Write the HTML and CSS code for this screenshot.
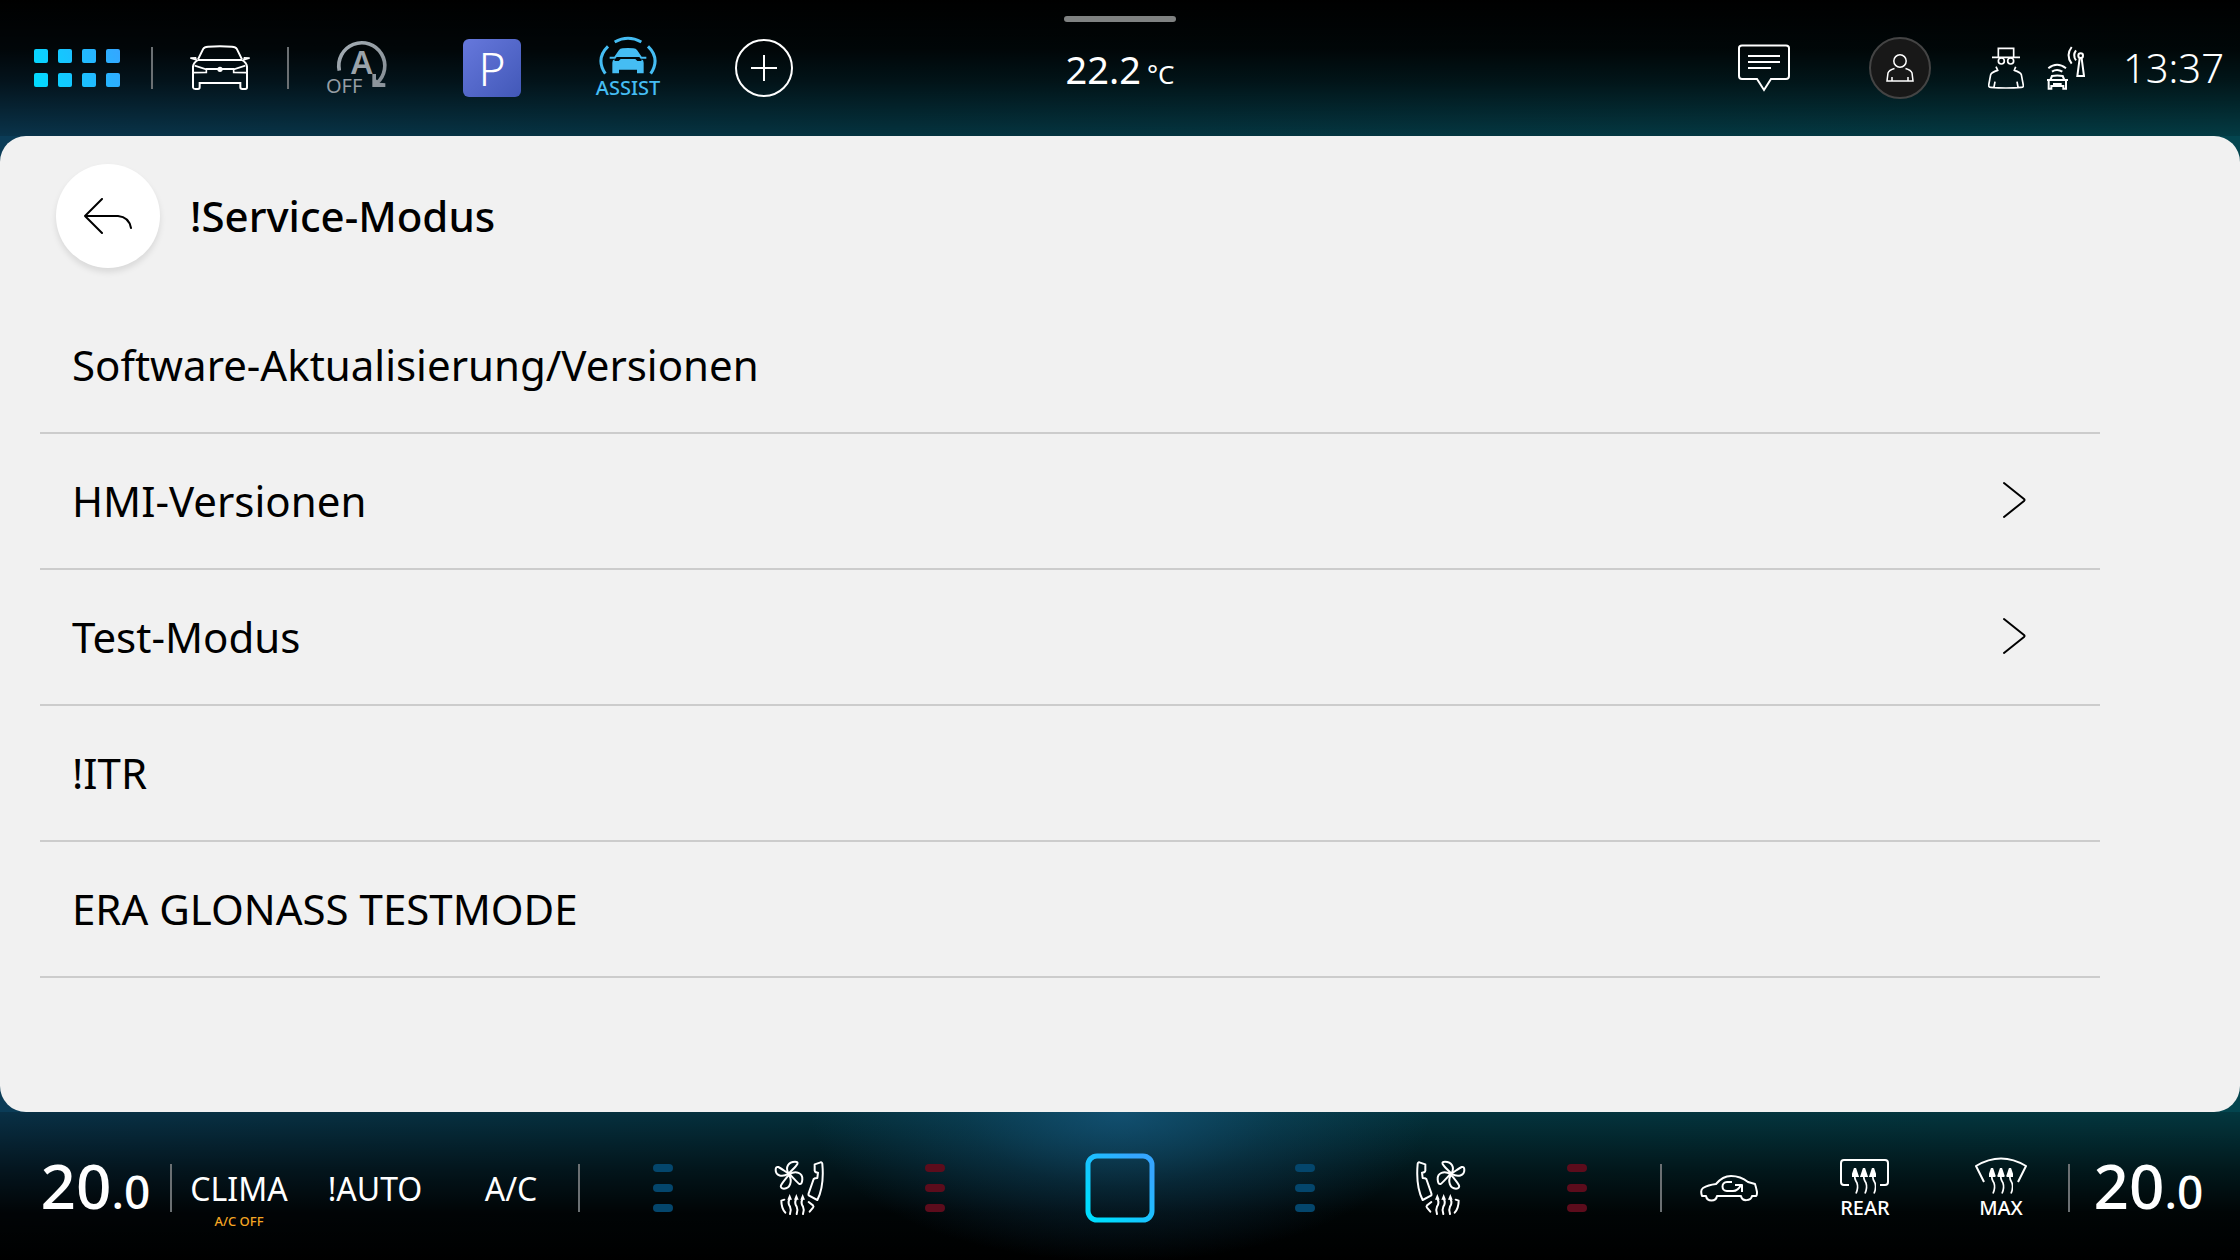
FILE: index.html
```html
<!DOCTYPE html>
<html lang="de">
<head>
<meta charset="utf-8">
<meta name="viewport" content="width=device-width, initial-scale=1">
<title>Service-Modus</title>
<link rel="stylesheet" href="styles.css">
</head>
<body>
<svg class="defs" aria-hidden="true">
  <defs>
    <linearGradient id="accent" gradientUnits="userSpaceOnUse" x1="0" y1="38" x2="86" y2="0">
      <stop offset="0" stop-color="#00dcff"/><stop offset="1" stop-color="#35a6ff"/>
    </linearGradient>
    <linearGradient id="home" x1="0" y1="1" x2="1" y2="0">
      <stop offset="0.15" stop-color="#00dcff"/><stop offset="0.85" stop-color="#35a6ff"/>
    </linearGradient>
    <linearGradient id="steel" x1="0" y1="0" x2="1" y2="1">
      <stop offset="0" stop-color="#a4adb4"/><stop offset="1" stop-color="#868e95"/>
    </linearGradient>
    <symbol id="seat" viewBox="28 34 150 168">
      <g fill="none" stroke="#fff" stroke-width="6" stroke-linejoin="round" stroke-linecap="round">
        <path d="M72 75 C60 55 72 39 91 39 Q101 39 98 46 C94 54 84 62 72 75Z"/>
        <path d="M72 75 C52 87 33 81 33 64 Q33 53 41 55 C48 58 58 66 72 75Z"/>
        <path d="M74 76 C94 66 114 72 113 92 Q112 108 104 106 C99 103 88 90 74 76Z"/>
        <path d="M73 78 C84 98 76 120 58 120 Q46 119 49 110 C52 104 62 92 73 78Z"/>
        <path d="M150 47 L168 41 Q172 40 173 46 Q179 112 158 154 L132 140 Q131 138 132 134 L147 91 Q150 88 158 88 L160 72 Q151 72 150 66Z"/>
        <path d="M59 153 L50 156 Q50 178 62 192"/>
        <path d="M132 160 L145 170 Q148 173 145 177 L135 189"/>
        <path d="M75 150 Q68 162 76 174 Q81 185 76 196"/>
        <path d="M95 150 Q88 162 96 174 Q101 185 96 196"/>
        <path d="M114 150 Q107 162 115 174 Q120 185 115 196"/>
      </g>
      <path fill="#fff" d="M68 153 L75 136 L82 153Z M88 153 L95 136 L102 153Z M107 153 L114 136 L121 153Z"/>
    </symbol>
    <symbol id="heat" viewBox="0 0 24 26">
      <g fill="none" stroke="#fff" stroke-width="1.700">
        <path d="M3 6 C2 10 3 12 5 15 C6 18 6 21 4 25.500"/>
        <path d="M12 6 C11 10 12 12 14 15 C15 18 15 21 13 25.500"/>
        <path d="M21 6 C20 10 21 12 23 15 C24 18 24 21 22 25.500"/>
      </g>
      <path fill="#fff" d="M.3 8 L3 0 L5.700 8Z M9.300 8 L12 0 L14.700 8Z M18.300 8 L21 0 L23.700 8Z"/>
    </symbol>
  </defs>
</svg>

<div class="screen">
  <header class="topbar">
    <nav class="shortcuts" aria-label="Schnellzugriff">
      <button class="apps" aria-label="Apps">
        <svg width="86" height="38" viewBox="0 0 86 38" fill="url(#accent)">
          <rect width="14" height="14" rx="2"/><rect x="24" width="14" height="14" rx="2"/><rect x="48" width="14" height="14" rx="2"/><rect x="72" width="14" height="14" rx="2"/>
          <rect y="24" width="14" height="14" rx="2"/><rect x="24" y="24" width="14" height="14" rx="2"/><rect x="48" y="24" width="14" height="14" rx="2"/><rect x="72" y="24" width="14" height="14" rx="2"/>
        </svg>
      </button>
      <span class="divider"></span>
      <button class="shortcut" aria-label="Fahrzeug">
        <svg width="60" height="46" viewBox="570 135 180 138" fill="none" stroke="#fff" stroke-width="6">
          <path d="M594 178 L610 146 Q613 141 624 140 Q660 137 696 140 Q707 141 710 146 L726 178"/>
          <path d="M571 174 L587 173 L589 180Z M749 174 L733 173 L731 180Z" stroke-width="4"/>
          <path d="M594 180 H726"/>
          <path d="M594 180 Q580 188 579 200 V262 Q580 267 586 267 H594 Q599 267 599 262 V249 H721 V262 Q721 267 727 267 H736 Q741 267 741 262 V200 Q740 188 726 180"/>
          <path d="M584 197 L619 208 V217 L580 218 M736 197 L701 208 V217 L740 218" stroke-width="5"/>
          <path d="M617 207 H703"/>
          <circle cx="660" cy="208" r="8" fill="#fff" stroke="none"/>
        </svg>
      </button>
      <span class="divider"></span>
      <button class="shortcut" aria-label="Start-Stopp">
        <svg width="64" height="64" viewBox="324 36 64 64">
          <g transform="scale(.333333)">
            <path d="M1018 212 A69 69 0 1 1 1130 250" fill="none" stroke="url(#steel)" stroke-width="11"/>
            <path d="M1117 222 V261 H1156 V250 L1138 248 L1128 238 V222Z" fill="#8d959c"/>
          </g>
          <text class="start-stop-letter" x="351" y="74">A</text>
          <text class="start-stop-state" x="326" y="93">OFF</text>
        </svg>
      </button>
      <button class="shortcut" aria-label="Parken"><span class="park">P</span></button>
      <button class="shortcut assist">
        <svg width="60" height="40" viewBox="534 112 180 120">
          <g fill="none" stroke="#45bdf3" stroke-width="9">
            <path d="M584 130 Q624 108 664 130 M564 143 Q526 180 556 225 M684 143 Q722 180 692 225"/>
          </g>
          <path fill="#45bdf3" d="M569 174 H583 L597 154 Q600 149 608 149 Q624 147 640 149 Q648 149 651 154 L665 174 H679 V180 H662 L658 175 H590 L586 180 H569Z M577 192 Q577 184 583 182 L584 187 H596 L602 181 H646 L652 187 H664 L665 182 Q671 184 671 192 V224 H651 V213 H597 V224 H577Z"/>
        </svg>
        <span>ASSIST</span>
      </button>
      <button class="shortcut" aria-label="Hinzufügen">
        <svg width="58" height="58" viewBox="0 0 58 58" fill="none" stroke="#fff" stroke-width="2">
          <circle cx="29" cy="29" r="28"/><path d="M29 16 V42 M16 29 H42"/>
        </svg>
      </button>
    </nav>

    <div class="outside">
      <span class="handle"></span>
      <p class="outside-temp">22.2<span>°C</span></p>
    </div>

    <div class="status">
      <button class="shortcut" aria-label="Mitteilungen">
        <svg width="52" height="48" viewBox="0 0 52 48" fill="none" stroke="#fff" stroke-width="2">
          <path d="M4 1.500 H48 Q51 1.500 51 4 V32 Q51 35 48 35 H33 L26 46 L19 35 H4 Q1 35 1 32 V4 Q1 1.500 4 1.500Z"/>
          <path d="M10 12 H42 M10 18 H42 M10 24 H33"/>
        </svg>
      </button>
      <button class="shortcut" aria-label="Benutzer">
        <span class="avatar">
          <svg width="28" height="28" viewBox="0 0 28 28" fill="none" stroke="#fff" stroke-width="1.500">
            <circle cx="14" cy="7" r="6.200"/>
            <path d="M8.500 14.500 Q3 16 2 19 L1 27 H27 L26 19 Q25 16 19.500 14.500 M6 23 V27 M22 23 V27"/>
          </svg>
        </span>
      </button>
      <div class="signals">
        <svg width="36" height="42" viewBox="24 35 108 126" fill="none" stroke="#fff" stroke-width="5">
          <path d="M36 66 H120 M55 66 V39 H101 V66"/>
          <circle cx="64" cy="77" r="9"/><circle cx="92" cy="77" r="9"/>
          <path d="M48 94 L53 105 Q34 111 32 118 L26 150 Q26 156 32 156 Q78 160 124 156 Q131 156 130 150 L124 118 Q122 111 103 105 L107 94 M45 139 L42 155 M111 139 L114 155"/>
        </svg>
        <svg width="38" height="44" viewBox="202 28 114 132" fill="none" stroke="#fff" stroke-width="6">
          <path d="M202 130 H265 M212 130 L217 118 Q233 115 249 118 L254 130 M207 131 V156 H215 V148 H251 V156 H259 V131 M220 142 H246"/>
          <path d="M206 95 Q232 74 259 95 M217 105 Q232 95 248 105"/>
          <circle cx="303" cy="57" r="7"/>
          <path d="M300 65 L293 118 H313 L306 65"/>
          <path d="M289 41 Q278 56 289 71 M276 31 Q257 56 276 81"/>
        </svg>
      </div>
      <time class="clock">13:37</time>
    </div>
  </header>

  <main class="panel">
    <div class="panel-head">
      <button class="back" aria-label="Zurück">
        <svg width="48" height="36" viewBox="0 0 48 36" fill="none" stroke="#000" stroke-width="2" stroke-linecap="round" stroke-linejoin="round">
          <path d="M18 1 L1 18 L18 35 M1 18 H34 Q45 19 47 30"/>
        </svg>
      </button>
      <h1>!Service-Modus</h1>
    </div>
    <ul class="menu">
      <li><button>Software-Aktualisierung/Versionen</button></li>
      <li><button>HMI-Versionen
        <svg width="24" height="38" viewBox="0 0 24 38" fill="none" stroke="#000" stroke-width="2" stroke-linecap="round" stroke-linejoin="round"><path d="M2 2 L22 18 Q23 19 22 20 L2 36"/></svg></button></li>
      <li><button>Test-Modus
        <svg width="24" height="38" viewBox="0 0 24 38" fill="none" stroke="#000" stroke-width="2" stroke-linecap="round" stroke-linejoin="round"><path d="M2 2 L22 18 Q23 19 22 20 L2 36"/></svg></button></li>
      <li><button>!ITR</button></li>
      <li><button>ERA GLONASS TESTMODE</button></li>
    </ul>
  </main>

  <footer class="climate">
    <div class="side">
      <button class="temp temp-left">20<span>.0</span></button>
      <div class="group">
        <span class="divider"></span>
        <button class="cell">CLIMA<small>A/C OFF</small></button>
        <button class="cell">!AUTO</button>
        <button class="cell">A/C</button>
        <span class="divider"></span>
      </div>
      <div class="group seats">
        <button class="cell levels cool" aria-label="Sitzlüftung links"><i></i><i></i><i></i></button>
        <button class="cell" aria-label="Sitz links"><svg width="50" height="56"><use href="#seat"/></svg></button>
        <button class="cell levels warm" aria-label="Sitzheizung links"><i></i><i></i><i></i></button>
      </div>
    </div>
    <button class="home" aria-label="Home">
      <svg width="70" height="70" viewBox="0 0 70 70" fill="none"><rect x="3" y="3" width="64" height="64" rx="9" stroke="url(#home)" stroke-width="5"/></svg>
    </button>
    <div class="side side-right">
      <div class="group seats">
        <button class="cell levels cool" aria-label="Sitzlüftung rechts"><i></i><i></i><i></i></button>
        <button class="cell" aria-label="Sitz rechts"><svg width="50" height="56" viewBox="0 0 50 56"><g transform="translate(50 0) scale(-1 1)"><use href="#seat" width="50" height="56"/></g></svg></button>
        <button class="cell levels warm" aria-label="Sitzheizung rechts"><i></i><i></i><i></i></button>
      </div>
      <div class="group">
        <span class="divider"></span>
        <button class="cell" aria-label="Umluft">
          <svg width="58" height="28" viewBox="0 0 58 28" fill="none" stroke="#fff" stroke-width="2" stroke-linejoin="round">
            <path d="M2 22 Q0 16 3 14 Q8 11 16 10 C21 4 25 2 31 2 C38 2 43 4 48 8 L55 10 Q56 13 57 18 Q57 22 56 22 L52 22 C51 27 42 28 41 22 H17 C16 28 7 28 6 22Z"/>
            <path d="M32 8 H27 C21 8 21 17 27 17 H33 Q38 17 41 11 M35 11 H42 V18"/>
          </svg>
        </button>
        <button class="cell defrost">
          <svg width="50" height="40" viewBox="0 -2 50 40" fill="none" stroke="#fff" stroke-width="2">
            <path d="M9 28 H4 Q1 28 1 25 V6 Q1 3 4 3 H45 Q48 3 48 6 V25 Q48 28 45 28 H40"/>
            <use href="#heat" x="12" y="11" width="24" height="26"/>
          </svg>
          <span>REAR</span>
        </button>
        <button class="cell defrost">
          <svg width="52" height="40" viewBox="0 -2 52 40" fill="none" stroke="#fff" stroke-width="2" stroke-linejoin="round">
            <path d="M9 25 L1 9 Q26 -6 51 9 L43 25"/>
            <use href="#heat" x="14" y="11" width="24" height="26"/>
          </svg>
          <span>MAX</span>
        </button>
        <span class="divider"></span>
      </div>
      <button class="temp temp-right">20<span>.0</span></button>
    </div>
  </footer>
</div>
</body>
</html>
```
FILE: styles.css
```css
* { box-sizing: border-box; }

body {
  margin: 0;
  background: #000;
  color: #fff;
  font-family: "Noto Sans", sans-serif;
}

h1, p, ul { margin: 0; padding: 0; }
ul { list-style: none; }
svg { display: block; flex: none; }

button {
  margin: 0;
  padding: 0;
  border: 0;
  background: none;
  color: inherit;
  font: inherit;
  cursor: pointer;
}

.defs { position: absolute; width: 0; height: 0; }

.screen {
  display: flex;
  flex-direction: column;
  min-height: 100vh;
  background: linear-gradient(to right, #0b3c57, #053c4a 40%, #04454f);
}

.divider {
  flex: none;
  width: 2px;
  height: 42px;
  margin: 0 -1px;
  background: #6b7073;
}

/* Top bar */
.topbar {
  display: grid;
  grid-template-columns: 1fr auto 1fr;
  height: 136px;
  background: linear-gradient(to bottom, #000 0, rgba(0, 0, 0, .9) 36%, rgba(0, 0, 0, .68) 60%, rgba(0, 0, 0, .15) 100%);
}

.shortcuts, .status {
  display: flex;
  align-items: center;
}

.apps {
  display: flex;
  width: 152px;
  padding-left: 34px;
}

.shortcut {
  display: flex;
  flex-direction: column;
  align-items: center;
  justify-content: center;
  width: 136px;
  height: 96px;
}

.start-stop-letter {
  fill: #9ba3aa;
  font-size: 32px;
  font-weight: 600;
}

.start-stop-state {
  fill: #959da4;
  font-size: 20px;
}

.park {
  width: 58px;
  border-radius: 6px;
  background: linear-gradient(135deg, #6678dc, #4258b8);
  font-size: 46px;
  font-weight: 300;
  line-height: 58px;
}

.assist {
  color: #45bdf3;
  font-size: 20px;
  font-weight: 500;
  line-height: 24px;
}

.outside { padding-top: 16px; }

.handle {
  display: block;
  width: 112px;
  height: 6px;
  border-radius: 3px;
  background: #7f8282;
}

.outside-temp {
  display: flex;
  align-items: baseline;
  justify-content: center;
  gap: 6px;
  margin-top: 20px;
  font-size: 38px;
  line-height: 54px;
}

.outside-temp span { font-size: 26px; }

.status {
  justify-content: flex-end;
  padding-right: 16px;
}

.avatar {
  display: flex;
  align-items: center;
  justify-content: center;
  width: 62px;
  height: 62px;
  border: 2px solid #444;
  border-radius: 50%;
  background: #181818;
}

.signals {
  display: flex;
  align-items: center;
  gap: 23px;
  padding: 0 38px 0 20px;
}

.clock {
  font-size: 40px;
  font-weight: 300;
  line-height: 54px;
}

/* Service menu */
.panel {
  flex: 1;
  padding: 28px 140px 28px 40px;
  border-radius: 26px;
  background: #f1f1f1;
  color: #000;
}

.panel-head {
  display: flex;
  align-items: center;
  gap: 30px;
  margin-bottom: 30px;
  padding-left: 16px;
}

.back {
  display: flex;
  align-items: center;
  justify-content: center;
  width: 104px;
  height: 104px;
  border-radius: 50%;
  background: #fff;
  box-shadow: 0 4px 6px rgba(0, 0, 0, .1);
}

h1 {
  font-size: 42px;
  font-weight: 500;
  line-height: 56px;
}

.menu li { border-bottom: 2px solid #ccc; }

.menu button {
  display: flex;
  align-items: center;
  justify-content: space-between;
  width: 100%;
  height: 134px;
  padding: 0 74px 2px 32px;
  font-size: 42px;
  text-align: left;
}

/* Climate bar */
.climate {
  display: grid;
  grid-template-columns: 1fr 234px 1fr;
  align-items: center;
  height: 148px;
  padding-top: 4px;
  background:
    radial-gradient(ellipse 310px 150px at 50% 0, rgba(22, 90, 130, .75), rgba(22, 90, 130, .3) 50%, transparent),
    linear-gradient(to bottom, rgba(0, 0, 0, .2) 0, rgba(0, 0, 0, .66) 40%, rgba(0, 0, 0, .93) 68%, #000 100%);
}

.side, .group {
  display: flex;
  align-items: center;
}

.side-right { justify-content: flex-end; }

.seats { margin-left: auto; }

.side-right .seats {
  margin-right: auto;
  margin-left: 0;
}

.climate .divider { height: 48px; }

.temp {
  display: flex;
  align-items: baseline;
  justify-content: center;
  width: 171px;
  font-size: 62px;
  font-weight: 500;
  line-height: 80px;
}

.temp span { font-size: 46px; }
.temp-left { padding-left: 20px; }
.temp-right { padding-right: 12px; }

.cell {
  position: relative;
  display: flex;
  flex-direction: column;
  align-items: center;
  justify-content: center;
  width: 136px;
  height: 96px;
  font-size: 32px;
}

.cell small {
  position: absolute;
  right: 0;
  bottom: 7px;
  left: 0;
  color: #f5a623;
  font-size: 13px;
  font-weight: 500;
  line-height: 16px;
}

.levels { gap: 12px; }

.levels i {
  width: 20px;
  height: 8px;
  border-radius: 4px;
}

.cool i { background: #04466c; }
.warm i { background: #5c0c1c; }

.defrost {
  font-size: 20px;
  font-weight: 500;
  line-height: 26px;
}

.home {
  display: flex;
  justify-self: center;
}
```
